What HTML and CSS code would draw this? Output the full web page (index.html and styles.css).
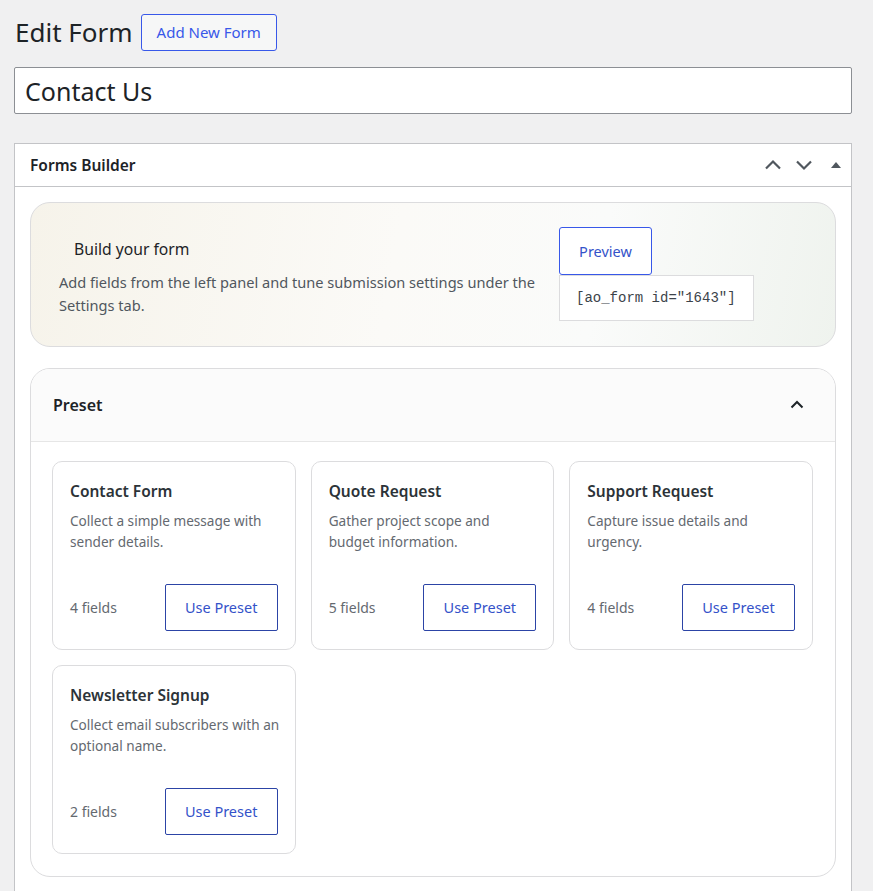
FILE: index.html
```html
<!DOCTYPE html>
<html lang="en">
<head>
    <meta charset="UTF-8">
    <meta name="viewport" content="width=device-width, initial-scale=1.0">
    <title>Edit Form</title>
    <link rel="stylesheet" href="styles.css">
</head>
<body>
    <div class="wrap">
        <div class="page-head">
            <h1>Edit Form</h1>
            <a class="add-new" href="#">Add New Form</a>
        </div>
        <input class="title-input" type="text" value="Contact Us">

        <div class="postbox">
            <div class="postbox-header">
                <h2>Forms Builder</h2>
                <div class="handle-actions">
                    <svg class="icon-up" width="18" height="18" viewBox="0 0 18 18"><polyline points="2,12.5 9,5.5 16,12.5" fill="none" stroke="#50575e" stroke-width="2.2"/></svg>
                    <svg class="icon-down" width="18" height="18" viewBox="0 0 18 18"><polyline points="2,5.5 9,12.5 16,5.5" fill="none" stroke="#50575e" stroke-width="2.2"/></svg>
                    <svg class="icon-toggle" width="12" height="18" viewBox="0 0 12 18"><polygon points="1,12 6,6 11,12" fill="#50575e"/></svg>
                </div>
            </div>
            <div class="postbox-body">
                <div class="hero">
                    <div class="hero-text">
                        <h3>Build your form</h3>
                        <p>Add fields from the left panel and tune submission settings under the Settings tab.</p>
                    </div>
                    <div class="hero-actions">
                        <a class="btn btn-preview" href="#">Preview</a>
                        <code class="shortcode">[ao_form id="1643"]</code>
                    </div>
                </div>

                <div class="panel">
                    <div class="panel-head">
                        <h3>Preset</h3>
                        <svg width="16" height="16" viewBox="0 0 16 16"><polyline points="2.5,10.5 8,5 13.5,10.5" fill="none" stroke="#1d2327" stroke-width="2"/></svg>
                    </div>
                    <div class="panel-body">
                        <div class="preset-grid">
                            <div class="preset-card">
                                <h4>Contact Form</h4>
                                <p>Collect a simple message with sender details.</p>
                                <div class="preset-foot">
                                    <span>4 fields</span>
                                    <a class="btn" href="#">Use Preset</a>
                                </div>
                            </div>
                            <div class="preset-card">
                                <h4>Quote Request</h4>
                                <p>Gather project scope and budget&nbsp;information.</p>
                                <div class="preset-foot">
                                    <span>5 fields</span>
                                    <a class="btn" href="#">Use Preset</a>
                                </div>
                            </div>
                            <div class="preset-card">
                                <h4>Support Request</h4>
                                <p>Capture issue details and urgency.</p>
                                <div class="preset-foot">
                                    <span>4 fields</span>
                                    <a class="btn" href="#">Use Preset</a>
                                </div>
                            </div>
                            <div class="preset-card">
                                <h4>Newsletter Signup</h4>
                                <p>Collect email subscribers with an optional name.</p>
                                <div class="preset-foot">
                                    <span>2 fields</span>
                                    <a class="btn" href="#">Use Preset</a>
                                </div>
                            </div>
                        </div>
                    </div>
                </div>
            </div>
        </div>
    </div>
</body>
</html>
```

FILE: styles.css
```css
body {
    margin: 0;
    background-color: #f0f0f1;
    font-family: "Noto Sans", sans-serif;
    color: #1d2327;
    font-size: 14px;
}
.wrap {
    padding: 14px 21px 0 14px;
}
.page-head {
    display: flex;
    align-items: center;
    margin-bottom: 16px;
}
.page-head h1 {
    margin: 0 8px 0 1px;
    font-size: 26px;
    font-weight: 400;
    line-height: 37px;
}
.add-new {
    display: inline-block;
    height: 35px;
    line-height: 35px;
    padding: 0 15px;
    border: 1px solid #3858e9;
    border-radius: 3px;
    color: #3858e9;
    text-decoration: none;
    font-size: 15px;
    background-color: #f6f7f7;
}
.title-input {
    display: block;
    width: 100%;
    box-sizing: border-box;
    height: 47px;
    padding: 0 10px;
    border: 1px solid #8c8f94;
    border-radius: 2px;
    font-family: "Noto Sans", sans-serif;
    font-size: 25px;
    color: #1d2327;
    background-color: #fff;
    margin-bottom: 29px;
}
.postbox {
    background-color: #fff;
    border: 1px solid #c3c4c7;
}
.postbox-header {
    display: flex;
    align-items: center;
    justify-content: space-between;
    height: 42px;
    border-bottom: 1px solid #c3c4c7;
    padding: 0 9px 0 15px;
}
.postbox-header h2 {
    margin: 0;
    font-size: 15.5px;
    font-weight: 600;
}
.handle-actions {
    display: flex;
    align-items: center;
}
.icon-down {
    margin-left: 13px;
}
.icon-toggle {
    margin-left: 17px;
}
.postbox-body {
    padding: 15px 15px 20px;
}
.hero {
    display: flex;
    align-items: center;
    gap: 14px;
    padding: 24px 28px 25px;
    border: 1px solid #dcdcde;
    border-radius: 20px;
    background: linear-gradient(100deg, #f6f3ea 0%, #fbfaf7 45%, #fafbfa 70%, #eff3ee 100%);
    margin-bottom: 21px;
}
.hero-text {
    width: 486px;
    padding-top: 6px;
}
.hero-text h3 {
    margin: 0 0 10px 15px;
    font-size: 15.7px;
    font-weight: 400;
    line-height: 24px;
}
.hero-text p {
    margin: 0;
    font-size: 14.6px;
    line-height: 23px;
    color: #50575e;
}
.hero-actions {
    display: flex;
    flex-direction: column;
    align-items: flex-start;
}
.btn {
    display: inline-block;
    box-sizing: border-box;
    border: 1px solid #2c44a6;
    border-radius: 2px;
    color: #3452c9;
    background-color: #fff;
    text-decoration: none;
    font-size: 14.5px;
    text-align: center;
}
.btn-preview {
    width: 93px;
    height: 48px;
    line-height: 46px;
    border-color: #3858e9;
    border-radius: 3px;
}
.shortcode {
    display: block;
    box-sizing: border-box;
    width: 195px;
    height: 46px;
    line-height: 44px;
    padding: 0 16px;
    border: 1px solid #dcdcde;
    background-color: #fff;
    font-family: "Liberation Mono", monospace;
    font-size: 14px;
    color: #3c434a;
}
.panel {
    border: 1px solid #dcdcde;
    border-radius: 20px;
    overflow: hidden;
}
.panel-head {
    display: flex;
    align-items: center;
    justify-content: space-between;
    height: 72px;
    padding: 0 30px 0 22px;
    background-color: #fbfbfb;
    border-bottom: 1px solid #e6e6e6;
}
.panel-head h3 {
    margin: 0;
    font-size: 16px;
    font-weight: 600;
}
.panel-body {
    padding: 19px 22px 22px 21px;
}
.preset-grid {
    display: grid;
    grid-template-columns: repeat(3, 1fr);
    gap: 15px;
}
.preset-card {
    display: flex;
    flex-direction: column;
    height: 189px;
    box-sizing: border-box;
    padding: 17px 17px 18px;
    border: 1px solid #dcdcde;
    border-radius: 10px;
}
.preset-card h4 {
    margin: 0 0 7px;
    font-size: 15.5px;
    font-weight: 600;
    line-height: 24px;
    color: #2c3338;
}
.preset-card p {
    margin: 0 -8px 0 0;
    font-size: 13.6px;
    line-height: 21px;
    color: #646970;
}
.preset-foot {
    margin-top: auto;
    display: flex;
    align-items: center;
    justify-content: space-between;
    color: #646970;
}
.preset-foot .btn {
    width: 113px;
    height: 47px;
    line-height: 45px;
}
```
